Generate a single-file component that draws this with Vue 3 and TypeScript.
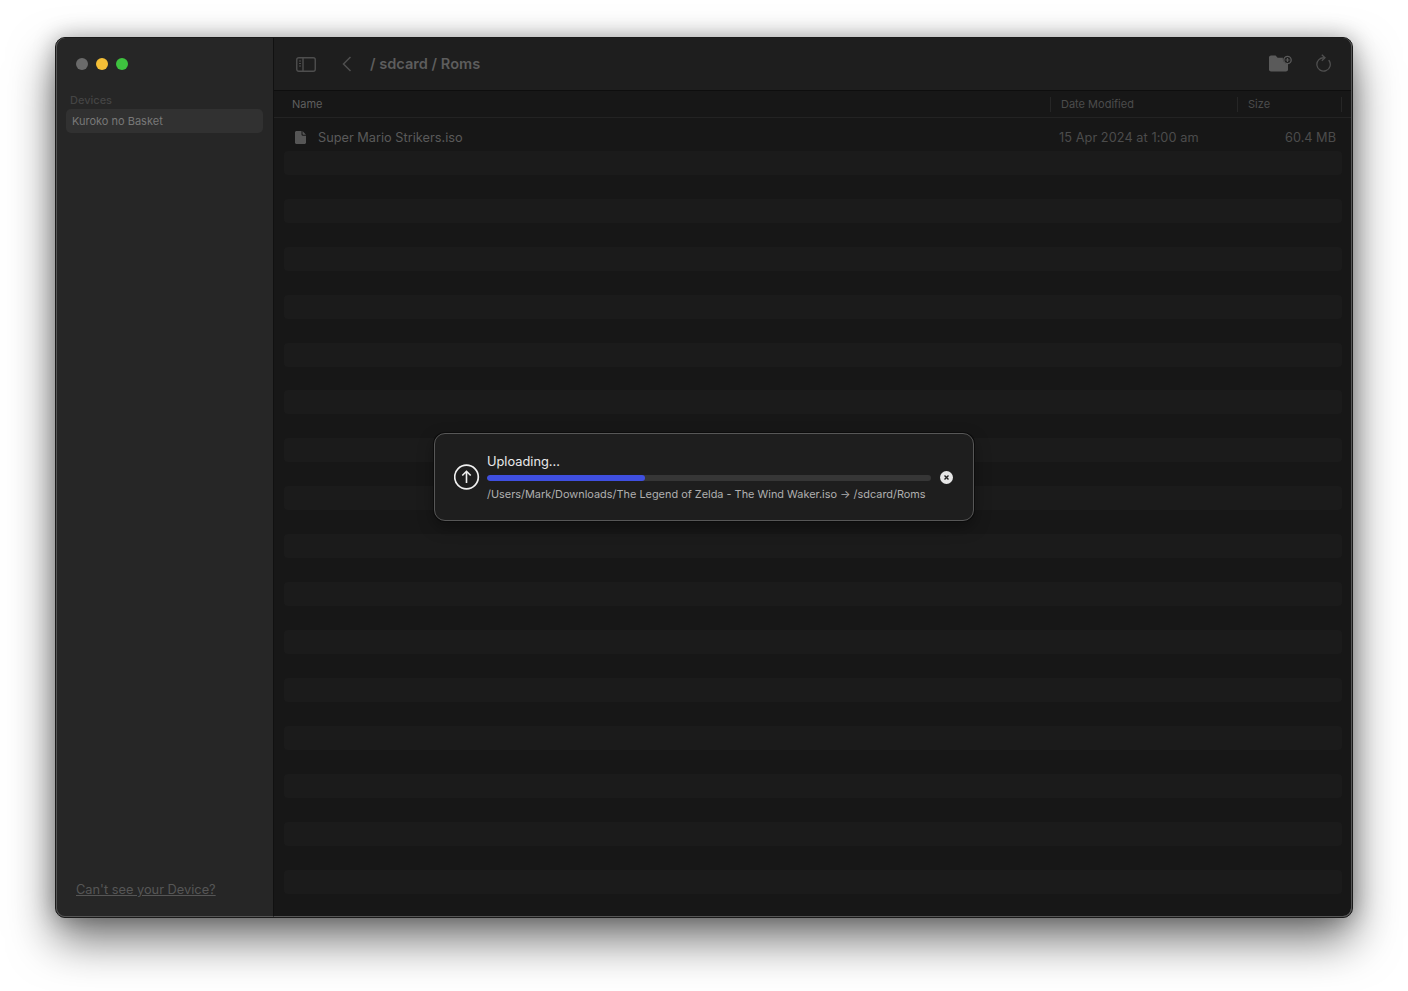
<script setup lang="ts">
const stripes = Array.from({ length: 16 }, (_, i) => i)
const progress = 35.6
</script>

<template>
  <div class="page">
    <div class="window">
      <aside class="sidebar">
        <div class="traffic">
          <span class="dot grey"></span>
          <span class="dot yellow"></span>
          <span class="dot green"></span>
        </div>
        <div class="side-label">Devices</div>
        <div class="device">Kuroko no Basket</div>
        <a class="help">Can't see your Device?</a>
      </aside>

      <main class="main">
        <header class="toolbar">
          <svg class="ic-sidebar" width="20" height="15" viewBox="0 0 20 15" fill="none">
            <rect x="0.75" y="0.75" width="18.5" height="13.5" rx="2" stroke="#4e4e4e" stroke-width="1.4" />
            <path d="M7 1v13" stroke="#4e4e4e" stroke-width="1.4" />
            <path d="M3 4h2M3 6.5h2M3 9h2" stroke="#4e4e4e" stroke-width="1.2" />
          </svg>
          <svg class="ic-back" width="10" height="16" viewBox="0 0 10 16" fill="none">
            <path d="M8.5 1 L1.5 8 L8.5 15" stroke="#4f4f4f" stroke-width="1.5" />
          </svg>
          <div class="path">/ sdcard / Roms</div>
          <svg class="ic-folder" width="23" height="17" viewBox="0 0 23 17">
            <path d="M0 2.5C0 1.4.9.5 2 .5h4.6l2 2.2H14a5 5 0 0 0 5 6.3v5.5c0 1.1-.9 2-2 2H2c-1.1 0-2-.9-2-2z" fill="#5a5a5a" />
            <circle cx="18.5" cy="5" r="3.7" fill="#1e1e1e" stroke="#5a5a5a" stroke-width="1.3" />
            <path d="M18.5 3v4M16.5 5h4" stroke="#5a5a5a" stroke-width="1.2" />
          </svg>
          <svg class="ic-refresh" width="16" height="19" viewBox="0 0 16 19" fill="none">
            <path d="M9.5 3.8A6.7 6.7 0 1 0 14 6.5" stroke="#4f4f4f" stroke-width="1.3" stroke-linecap="round" />
            <path d="M6.8 .8 L10 3.8 L6.8 6.8" stroke="#4f4f4f" stroke-width="1.3" />
          </svg>
        </header>

        <div class="columns">
          <div class="col col-name">Name</div>
          <div class="col col-date">Date Modified</div>
          <div class="col col-size">Size</div>
        </div>

        <div class="list">
          <div class="row file">
            <svg class="ic-file" width="11" height="13" viewBox="0 0 11 13">
              <path d="M1.5 0H6.5V3.5C6.5 4.2 7 4.7 7.7 4.7H11V11.5C11 12.3 10.3 13 9.5 13H1.5C.7 13 0 12.3 0 11.5V1.5C0 .7.7 0 1.5 0z" fill="#565656" />
              <path d="M7.5 0 L11 3.7H8.2C7.8 3.7 7.5 3.4 7.5 3z" fill="#565656" />
            </svg>
            <span class="file-name">Super Mario Strikers.iso</span>
            <span class="file-date">15 Apr 2024 at 1:00 am</span>
            <span class="file-size">60.4 MB</span>
          </div>
          <template v-for="i in stripes" :key="i">
            <div class="row stripe"></div>
            <div v-if="i < stripes.length - 1" class="row"></div>
          </template>
        </div>
      </main>

      <div class="modal">
        <svg class="ic-upload" width="26" height="26" viewBox="0 0 26 26" fill="none">
          <circle cx="12.5" cy="13" r="11.8" stroke="#f0f0f0" stroke-width="1.7" />
          <path d="M12.5 19V7.5M8.3 11.5 L12.5 7.3 L16.7 11.5" stroke="#f0f0f0" stroke-width="1.6" />
        </svg>
        <div class="modal-body">
          <div class="modal-title">Uploading...</div>
          <div class="bar">
            <div class="bar-fill" :style="{ width: progress + '%' }"></div>
          </div>
          <div class="modal-path">/Users/Mark/Downloads/The Legend of Zelda - The Wind Waker.iso → /sdcard/Roms</div>
        </div>
        <svg class="ic-close" width="13" height="13" viewBox="0 0 13 13" fill="none">
          <circle cx="6.5" cy="6.5" r="6.5" fill="#e6e6e6" />
          <path d="M4.5 4.5 L8.5 8.5 M8.5 4.5 L4.5 8.5" stroke="#222" stroke-width="1.4" />
        </svg>
      </div>
    </div>
  </div>
</template>

<style>
html,
body {
  margin: 0;
  background: #fff;
}
</style>

<style scoped>
.page {
  width: 1408px;
  height: 991px;
  box-sizing: border-box;
  padding: 37px 55px 73px;
  background: #fff;
  overflow: hidden;
  font-family: Inter, "Liberation Sans", sans-serif;
}

.window {
  position: relative;
  display: flex;
  height: 881px;
  box-sizing: border-box;
  border-radius: 10px;
  background: #171717;
  box-shadow: 0 0 0 1px #6a6a6a inset, 0 22px 46px rgba(0, 0, 0, 0.55), 0 0 22px rgba(0, 0, 0, 0.28);
  border: 1px solid #1a1a1a;
}

.sidebar {
  width: 218px;
  flex: none;
  display: flex;
  flex-direction: column;
  box-sizing: border-box;
  padding: 0 10px 0 9px;
  background: #262626;
  border-radius: 9px 0 0 9px;
  border-right: 1px solid #111;
  border-left: 1px solid #555;
  border-bottom: 1px solid #555;
}

.traffic {
  display: flex;
  gap: 8px;
  padding: 20px 0 0 10px;
}

.dot {
  width: 12px;
  height: 12px;
  border-radius: 50%;
}

.grey {
  background: #6a6a6a;
}

.yellow {
  background: #f4bf37;
}

.green {
  background: #3ec23f;
}

.side-label {
  margin: 23px 0 0 4px;
  font-size: 11px;
  line-height: 14px;
  font-weight: 500;
  color: #444;
}

.device {
  margin-top: 2px;
  height: 24px;
  line-height: 24px;
  padding-left: 6px;
  border-radius: 5px;
  background: #313131;
  color: #787878;
  font-size: 11px;
}

.help {
  margin: auto 0 18px 10px;
  font-size: 12.8px;
  line-height: 17px;
  color: #565656;
  text-decoration: underline;
}

.main {
  flex: 1;
  min-width: 0;
  display: flex;
  flex-direction: column;
  border-radius: 0 9px 9px 0;
  border-right: 1px solid #555;
  border-bottom: 1px solid #555;
  overflow: hidden;
}

.toolbar {
  display: flex;
  align-items: center;
  height: 52px;
  flex: none;
  background: #1e1e1e;
  border-bottom: 1px solid #0e0e0e;
}

.ic-sidebar {
  margin-left: 22px;
}

.ic-back {
  margin-left: 26px;
}

.ic-folder {
  margin-left: auto;
  margin-bottom: 2px;
}

.ic-refresh {
  margin-left: 23px;
  margin-right: 20px;
  margin-bottom: 2px;
}

.path {
  margin-left: 18px;
  font-size: 14.6px;
  font-weight: 600;
  color: #5d5d5d;
}

.columns {
  display: flex;
  height: 27px;
  flex: none;
  align-items: center;
  background: #171717;
  border-bottom: 1px solid #232323;
  font-size: 11px;
  color: #5f5f5f;
  box-sizing: border-box;
}

.col {
  height: 15px;
  line-height: 15px;
  box-sizing: border-box;
}

.col-name {
  width: 776px;
  padding-left: 18px;
}

.col-date {
  width: 187px;
  padding-left: 10px;
  border-left: 1px solid #262626;
  color: #4c4c4c;
}

.col-size {
  width: 105px;
  padding-left: 10px;
  border-left: 1px solid #262626;
  border-right: 1px solid #262626;
  color: #4c4c4c;
}

.list {
  flex: 1;
  padding: 9px 9px 0 10px;
  display: flex;
  flex-direction: column;
}

.row {
  height: 23.96px;
  flex: none;
  border-radius: 4px;
}

.stripe {
  background: #1b1b1b;
}

.file {
  display: flex;
  align-items: center;
  box-sizing: border-box;
  padding-bottom: 2px;
  font-size: 12.75px;
  color: #5a5a5a;
}

.ic-file {
  margin-left: 11px;
}

.file-name {
  margin-left: 12px;
  width: 741px;
}

.file-date {
  width: 226px;
  letter-spacing: 0.05px;
  color: #4c4c4c;
}

.file-size {
  color: #4c4c4c;
}

.modal {
  position: absolute;
  left: 378px;
  top: 395px;
  width: 540px;
  height: 88px;
  box-sizing: border-box;
  display: flex;
  align-items: center;
  padding: 0 20px 0 19px;
  background: #1e1e1e;
  border: 1px solid #575757;
  border-radius: 11px;
  box-shadow: 0 0 0 1px #0c0c0c, 0 6px 16px rgba(0, 0, 0, 0.35);
}

.ic-upload {
  flex: none;
}

.modal-body {
  width: 445px;
  margin-left: 7px;
  margin-top: 1px;
}

.modal-title {
  font-size: 12.8px;
  line-height: 17px;
  color: #eaeaea;
}

.bar {
  margin-top: 5px;
  height: 6px;
  border-radius: 3px;
  background: #363636;
  overflow: hidden;
}

.bar-fill {
  height: 100%;
  border-radius: 3px;
  background: #3f4fe0;
}

.modal-path {
  margin-top: 6px;
  font-size: 10.92px;
  line-height: 15px;
  color: #b0b0b0;
  white-space: nowrap;
}

.ic-close {
  flex: none;
  margin-left: 9px;
}
</style>
